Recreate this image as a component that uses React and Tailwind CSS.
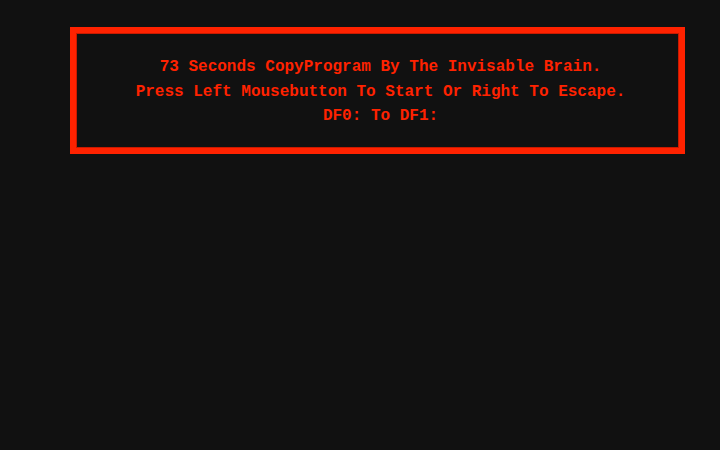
export default function App() {
  const lines = [
    '73 Seconds CopyProgram By The Invisable Brain.',
    'Press Left Mousebutton To Start Or Right To Escape.',
    'DF0: To DF1:',
  ]
  return (
    <div className="w-[720px] h-[450px] bg-[#111111] overflow-hidden pt-[27px] pl-[70px]">
      <div className="w-[615px] h-[127px] border-[6px] border-[#ff2200] shadow-[inset_0_0_0_1px_#c81a00] pt-[22px] pl-[6px] flex flex-col items-center">
        {lines.map((l, i) => (
          <div
            key={i}
            className="text-[16px] leading-[24.5px] font-bold text-[#ff2200] whitespace-pre font-['Liberation_Mono','DejaVu_Sans_Mono',monospace]"
          >{l}</div>
        ))}
      </div>
    </div>
  )
}
